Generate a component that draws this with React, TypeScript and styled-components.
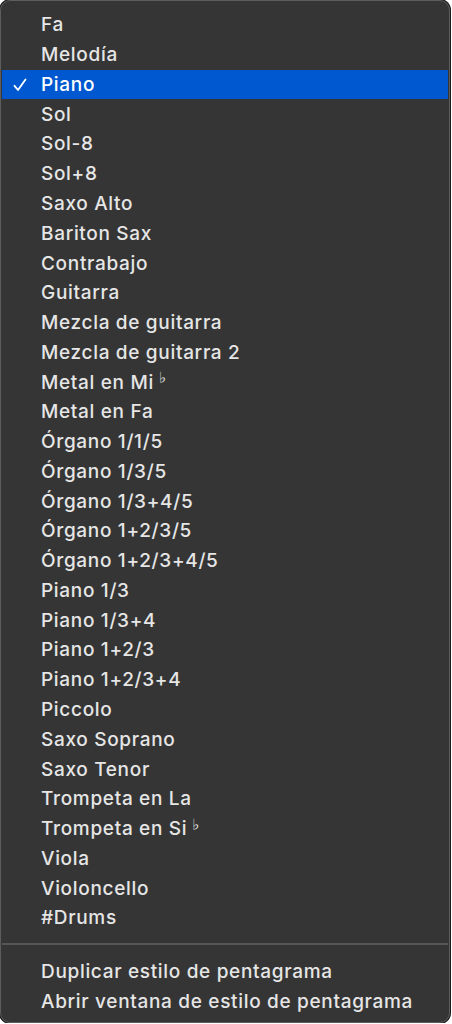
import React from "react";
import styled, { createGlobalStyle } from "styled-components";

const GlobalStyle = createGlobalStyle`
  html, body {
    margin: 0;
    padding: 0;
    background: #ffffff;
  }
  body {
    font-family: Inter, "Noto Sans", "Liberation Sans", sans-serif;
    -webkit-font-smoothing: antialiased;
  }
`;

const Menu = styled.div`
  box-sizing: border-box;
  width: 450px;
  height: 1023px;
  background: #353535;
  border: 1px solid #5d5d5d;
  border-radius: 10px;
  box-shadow: 0 0 0 1px #1a1a1a;
  padding: 9px 1px 0 1px;
  display: flex;
  flex-direction: column;
  overflow: hidden;
`;

const Item = styled.div<{ $active?: boolean }>`
  height: 29.77px;
  display: flex;
  align-items: center;
  padding-left: 39px;
  position: relative;
  font-size: 19px;
  font-weight: 500;
  letter-spacing: 0.68px;
  color: #e6e6e6;
  white-space: nowrap;
  background: ${(p) => (p.$active ? "#0058d0" : "transparent")};
  ${(p) => p.$active && "color: #ffffff;"}
`;

const Check = styled.span`
  position: absolute;
  left: 10px;
  top: 7px;
  width: 16px;
  height: 16px;
  display: flex;
`;

const Flat = styled.span`
  font-size: 15px;
  font-weight: 700;
  font-family: "DejaVu Sans", sans-serif;
  color: #e6e6e6;
  margin-left: 5px;
  position: relative;
  top: -4px;
`;

const Separator = styled.div`
  height: 2px;
  background: #565656;
  margin: 10px 0 12px;
`;

type Entry = { label: string; flat?: boolean; active?: boolean };

const styles: Entry[] = [
  { label: "Fa" },
  { label: "Melodía" },
  { label: "Piano", active: true },
  { label: "Sol" },
  { label: "Sol-8" },
  { label: "Sol+8" },
  { label: "Saxo Alto" },
  { label: "Bariton Sax" },
  { label: "Contrabajo" },
  { label: "Guitarra" },
  { label: "Mezcla de guitarra" },
  { label: "Mezcla de guitarra 2" },
  { label: "Metal en Mi", flat: true },
  { label: "Metal en Fa" },
  { label: "Órgano 1/1/5" },
  { label: "Órgano 1/3/5" },
  { label: "Órgano 1/3+4/5" },
  { label: "Órgano 1+2/3/5" },
  { label: "Órgano 1+2/3+4/5" },
  { label: "Piano 1/3" },
  { label: "Piano 1/3+4" },
  { label: "Piano 1+2/3" },
  { label: "Piano 1+2/3+4" },
  { label: "Piccolo" },
  { label: "Saxo Soprano" },
  { label: "Saxo Tenor" },
  { label: "Trompeta en La" },
  { label: "Trompeta en Si", flat: true },
  { label: "Viola" },
  { label: "Violoncello" },
  { label: "#Drums" },
];

const CheckIcon = () => (
  <svg width="16" height="16" viewBox="0 0 16 16" fill="none">
    <path d="M2.5 8.8 L6 13 L13.5 2.5" stroke="#ffffff" strokeWidth="1.8" strokeLinecap="round" strokeLinejoin="round" />
  </svg>
);

export default function App() {
  return (
    <>
      <GlobalStyle />
      <Menu>
        {styles.map((s, i) => (
          <Item key={i} $active={s.active}>
            {s.active && (
              <Check>
                <CheckIcon />
              </Check>
            )}
            {s.label}
            {s.flat && <Flat>♭</Flat>}
          </Item>
        ))}
        <Separator />
        <Item>Duplicar estilo de pentagrama</Item>
        <Item>Abrir ventana de estilo de pentagrama</Item>
      </Menu>
    </>
  );
}
